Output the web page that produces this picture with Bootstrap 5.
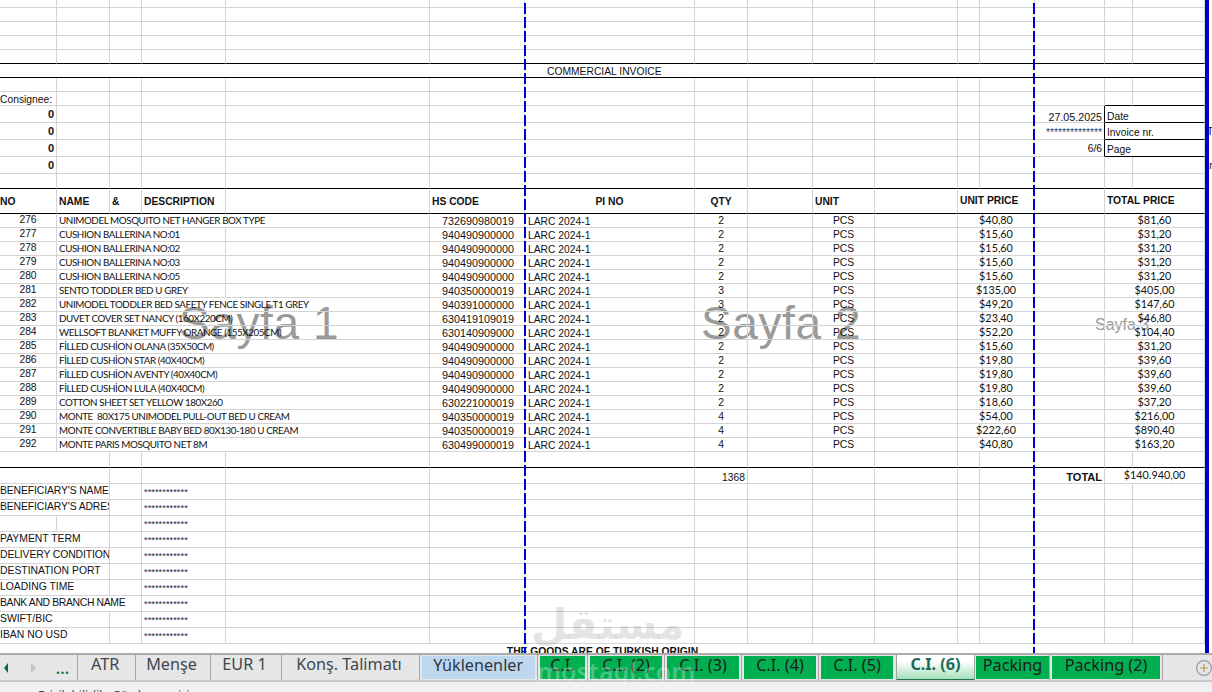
<!DOCTYPE html>
<html lang="tr">
<head>
<meta charset="utf-8">
<title>Commercial Invoice</title>
<link href="https://cdn.jsdelivr.net/npm/bootstrap@5.3.0/dist/css/bootstrap.min.css" rel="stylesheet">
<style>
html,body{height:692px;overflow:hidden;background:#fff}
.xl-sheet{height:653px;overflow:hidden;flex:none}
.xl-grid{width:1212px;table-layout:fixed;border-collapse:separate;border-spacing:0;font:10.3px/10px "Liberation Sans",Arial,sans-serif;color:#111;position:relative;z-index:1}
.xl-grid col:nth-child(1){width:57px}.xl-grid col:nth-child(2){width:53px}.xl-grid col:nth-child(3){width:32px}.xl-grid col:nth-child(4){width:84px}
.xl-grid col:nth-child(5){width:204px}.xl-grid col:nth-child(6){width:95px}.xl-grid col:nth-child(7){width:170px}.xl-grid col:nth-child(8){width:53px}
.xl-grid col:nth-child(9){width:65px}.xl-grid col:nth-child(10){width:62px}.xl-grid col:nth-child(11){width:83px}.xl-grid col:nth-child(12){width:22px}
.xl-grid col:nth-child(13){width:55px}.xl-grid col:nth-child(14){width:70px}.xl-grid col:nth-child(15){width:28px}.xl-grid col:nth-child(16){width:72px}.xl-grid col:nth-child(17){width:7px}
.xl-grid td{padding:0;height:14px;border-right:1px solid #d4d4d4;border-bottom:1px solid #d4d4d4;white-space:nowrap;vertical-align:middle}
.xl-grid td.xl-free{border:0;padding-left:2px;overflow:hidden}
tr.h8 td{height:8px}tr.h15 td{height:15px}tr.h16 td{height:16px}tr.h17 td{height:17px}tr.h25 td{height:25px}
tr.bk td{border-bottom-color:#000}
.xl-grid td.bb{border-bottom-color:#000}.xl-grid td.br{border-right-color:#000}
.xl-grid td.nb{border:0;height:16px}
.clip{overflow:hidden}
.hd{font-weight:700;font-size:10.3px}
.xl-grid td.dn1{padding-top:2px}
.xl-grid td.dn2{padding-top:4px}
.xl-grid td.dn3{padding-top:5px}
.xl-grid td.title{padding-left:22px;padding-top:2px}
.xl-grid td.dt{font-size:10.7px;padding-top:5px}
.xl-grid td.lbl{font-size:10.4px;padding-bottom:1px}
.xl-grid td.tight-s{letter-spacing:-.12px}
.xl-grid td.tight-l{letter-spacing:-.35px}
.xl-grid td.tot{font-size:11px;font-weight:700;padding-top:3px}
.xl-grid td.nm{font-family:Lato,"Liberation Sans",sans-serif;font-size:9.8px;padding-left:2px;letter-spacing:-.4px;padding-bottom:2px}
.xl-grid td.no{text-align:center;padding-bottom:2px}
.xl-grid td.hs{font-size:10.8px;text-align:center;padding-top:1px;padding-left:2px}
.xl-grid td.pi{padding-left:3px;padding-top:2px;font-size:10.3px}
.xl-grid td.pr{font-family:Lato,"Liberation Sans",sans-serif;font-size:10.8px;text-align:center;padding-bottom:1px}
.xl-grid td.stars{font-size:9.4px;color:#2c2745;padding-left:2px}
.xl-grid td.stars-d{font-size:10.3px;color:#1f3f78;padding-top:3px}
.xl-grid td.pl2{padding-left:2px}.xl-grid td.pr2{padding-right:2px}
.xl-grid td.zero{font-weight:700;font-size:11px;text-align:right;padding-right:2px}
.wm{position:absolute;font-family:"Liberation Sans",Arial,sans-serif;color:#9a9a9a;line-height:1;z-index:0;white-space:nowrap}
.wm-1{left:179px;top:300px;font-size:46px;letter-spacing:.6px}
.wm-2{left:701px;top:300px;font-size:46px;letter-spacing:.6px}
.wm-3{left:1095px;top:317px;font-size:16px}
.pb{position:absolute;top:3px;width:2px;height:650px;z-index:2;background:repeating-linear-gradient(#0000d4 0 11px,transparent 11px 14px)}
.pb-1{left:524px}.pb-2{left:1033px}
.edge{position:absolute;top:0;left:1205px;width:4px;height:653px;background:#0000c4;z-index:2}
.mq{position:absolute;z-index:5;pointer-events:none;white-space:nowrap;line-height:1}
.mq-ar{left:531px;top:600px;font:700 42px "DejaVu Sans",sans-serif;color:rgba(150,150,150,.26)}
.mq-en{left:537px;top:654px;font:600 25px "Noto Sans",sans-serif;color:rgba(255,255,255,.28)}
.tabbar{height:29px;flex:none;background:#e6e6e6;border-top:2px solid #ababab;border-bottom:2px solid #c9c9c9;overflow:hidden;font-family:"Noto Sans",sans-serif;font-size:16.2px;line-height:19px;color:#3f4650}
.tab-ctl{width:77px;height:25px;flex:none}
.tab-dots{color:#217346;font:700 14px/16px "Noto Sans",sans-serif;letter-spacing:.6px;margin-left:15px;margin-top:2px}
.tab-it{flex:none;height:25px;border-left:1px solid #a6a6a6;text-align:center}
.tab-fill{display:block;height:23px;margin:1px 2px 0 2px;color:#1c1c1c;line-height:18px}
.g{background:#00b050}.y{background:#bdd7ee;color:#2d3640}
.w1,.w2,.w3,.w4{padding-right:2px}
.w1{width:57.5px}.w2{width:75px}.w3{width:71px}.w4{width:138px}
.w5{width:118.5px}.w6{width:50px}.w7{width:77px}.w8{width:77px}
.w10{width:82px;margin-left:1px;text-align:center}.w11{width:113px}
.tab-active{flex:none;width:79px;height:28px;margin-top:-2px;margin-left:1px;border-left:1px solid #a0a0a0;border-right:1px solid #a0a0a0;border-bottom:2px solid #217346;background:linear-gradient(#fff 0,#fff 8px,#a6e0bb 100%);text-align:center;font-weight:700;color:#1d6a5c;line-height:22px}
.tab-end{flex:none;width:1px;height:25px;background:#a6a6a6}
.tab-plus{flex:none;margin-left:33px;margin-top:5px}
.statusbar{height:10px;flex:none;overflow:hidden;background:#f1f1f1;font:12px/14px "Noto Sans",sans-serif;color:#444;padding:7px 0 0 38px}
</style>
</head>
<body class="d-flex flex-column m-0">
<div class="xl-sheet position-relative">
<span class="wm wm-1">Sayfa 1</span><span class="wm wm-2">Sayfa 2</span><span class="wm wm-3">Sayfa 3</span>
<table class="xl-grid">
<colgroup><col><col><col><col><col><col><col><col><col><col><col><col><col><col><col><col><col></colgroup>
<tbody>
<tr class="h8"><td></td><td></td><td></td><td></td><td></td><td></td><td></td><td></td><td></td><td></td><td></td><td></td><td></td><td></td><td></td><td></td></tr>
<tr><td></td><td></td><td></td><td></td><td></td><td></td><td></td><td></td><td></td><td></td><td></td><td></td><td></td><td></td><td></td><td></td></tr>
<tr><td></td><td></td><td></td><td></td><td></td><td></td><td></td><td></td><td></td><td></td><td></td><td></td><td></td><td></td><td></td><td></td></tr>
<tr><td></td><td></td><td></td><td></td><td></td><td></td><td></td><td></td><td></td><td></td><td></td><td></td><td></td><td></td><td></td><td></td></tr>
<tr class="bk"><td></td><td></td><td></td><td></td><td></td><td></td><td></td><td></td><td></td><td></td><td></td><td></td><td></td><td></td><td></td><td></td></tr>
<tr class="bk"><td colspan="6" class="border-end-0"></td><td colspan="10" class="border-end-0 title">COMMERCIAL INVOICE</td></tr>
<tr><td></td><td></td><td></td><td></td><td></td><td></td><td></td><td></td><td></td><td></td><td></td><td></td><td></td><td></td><td></td><td></td></tr>
<tr><td class="dn1">Consignee:</td><td></td><td></td><td></td><td></td><td></td><td></td><td></td><td></td><td></td><td></td><td></td><td></td><td></td><td class="bb"></td><td class="bb"></td></tr>
<tr class="h17"><td class="zero">0</td><td></td><td></td><td></td><td></td><td></td><td></td><td></td><td></td><td></td><td></td><td></td><td></td><td class="br text-end pr2 dt">27.05.2025</td><td colspan="2" class="bb pl2 dn3">Date</td></tr>
<tr class="h17"><td class="zero">0</td><td></td><td></td><td></td><td></td><td></td><td></td><td></td><td></td><td></td><td></td><td></td><td></td><td class="br text-end pr2 stars-d">**************</td><td colspan="2" class="bb pl2 dn2">Invoice nr.</td><td class="xl-free">T</td></tr>
<tr class="h17"><td class="zero">0</td><td></td><td></td><td></td><td></td><td></td><td></td><td></td><td></td><td></td><td></td><td></td><td></td><td class="br text-end pr2 dn1">6/6</td><td colspan="2" class="bb pl2 dn2">Page</td></tr>
<tr class="h17"><td class="zero">0</td><td></td><td></td><td></td><td></td><td></td><td></td><td></td><td></td><td></td><td></td><td></td><td></td><td></td><td></td><td></td><td class="xl-free">in</td></tr>
<tr class="h15 bk"><td></td><td></td><td></td><td></td><td></td><td></td><td></td><td></td><td></td><td></td><td></td><td></td><td></td><td></td><td></td><td></td></tr>
<tr class="h25 bk hd"><td class="dn1">NO</td><td class="pl2 dn1">NAME</td><td class="pl2 dn1">&amp;</td><td class="pl2 dn1">DESCRIPTION</td><td></td><td class="pl2 dn1">HS CODE</td><td class="text-center dn1">PI NO</td><td class="text-center dn1">QTY</td><td></td><td class="pl2 dn1">UNIT</td><td></td><td colspan="2" class="pl2">UNIT PRICE</td><td></td><td colspan="2" class="pl2">TOTAL PRICE</td></tr>
<tr><td class="no">276</td><td colspan="4" class="nm">UNIMODEL MOSQUITO NET HANGER BOX TYPE</td><td class="hs">732690980019</td><td class="pi">LARC 2024-1</td><td class="text-center">2</td><td></td><td class="text-center">PCS</td><td></td><td colspan="2" class="pr">$40,80</td><td></td><td colspan="2" class="pr">$81,60</td></tr>
<tr><td class="no">277</td><td colspan="3" class="nm">CUSHION BALLERINA NO:01</td><td></td><td class="hs">940490900000</td><td class="pi">LARC 2024-1</td><td class="text-center">2</td><td></td><td class="text-center">PCS</td><td></td><td colspan="2" class="pr">$15,60</td><td></td><td colspan="2" class="pr">$31,20</td></tr>
<tr><td class="no">278</td><td colspan="3" class="nm">CUSHION BALLERINA NO:02</td><td></td><td class="hs">940490900000</td><td class="pi">LARC 2024-1</td><td class="text-center">2</td><td></td><td class="text-center">PCS</td><td></td><td colspan="2" class="pr">$15,60</td><td></td><td colspan="2" class="pr">$31,20</td></tr>
<tr><td class="no">279</td><td colspan="3" class="nm">CUSHION BALLERINA NO:03</td><td></td><td class="hs">940490900000</td><td class="pi">LARC 2024-1</td><td class="text-center">2</td><td></td><td class="text-center">PCS</td><td></td><td colspan="2" class="pr">$15,60</td><td></td><td colspan="2" class="pr">$31,20</td></tr>
<tr><td class="no">280</td><td colspan="3" class="nm">CUSHION BALLERINA NO:05</td><td></td><td class="hs">940490900000</td><td class="pi">LARC 2024-1</td><td class="text-center">2</td><td></td><td class="text-center">PCS</td><td></td><td colspan="2" class="pr">$15,60</td><td></td><td colspan="2" class="pr">$31,20</td></tr>
<tr><td class="no">281</td><td colspan="3" class="nm">SENTO TODDLER BED U GREY</td><td></td><td class="hs">940350000019</td><td class="pi">LARC 2024-1</td><td class="text-center">3</td><td></td><td class="text-center">PCS</td><td></td><td colspan="2" class="pr">$135,00</td><td></td><td colspan="2" class="pr">$405,00</td></tr>
<tr><td class="no">282</td><td colspan="4" class="nm">UNIMODEL TODDLER BED SAFETY FENCE SINGLE T1 GREY</td><td class="hs">940391000000</td><td class="pi">LARC 2024-1</td><td class="text-center">3</td><td></td><td class="text-center">PCS</td><td></td><td colspan="2" class="pr">$49,20</td><td></td><td colspan="2" class="pr">$147,60</td></tr>
<tr><td class="no">283</td><td colspan="4" class="nm">DUVET COVER SET NANCY (160X220CM)</td><td class="hs">630419109019</td><td class="pi">LARC 2024-1</td><td class="text-center">2</td><td></td><td class="text-center">PCS</td><td></td><td colspan="2" class="pr">$23,40</td><td></td><td colspan="2" class="pr">$46,80</td></tr>
<tr><td class="no">284</td><td colspan="4" class="nm">WELLSOFT BLANKET MUFFY ORANGE (155X205CM)</td><td class="hs">630140909000</td><td class="pi">LARC 2024-1</td><td class="text-center">2</td><td></td><td class="text-center">PCS</td><td></td><td colspan="2" class="pr">$52,20</td><td></td><td colspan="2" class="pr">$104,40</td></tr>
<tr><td class="no">285</td><td colspan="4" class="nm">FİLLED CUSHİON OLANA (35X50CM)</td><td class="hs">940490900000</td><td class="pi">LARC 2024-1</td><td class="text-center">2</td><td></td><td class="text-center">PCS</td><td></td><td colspan="2" class="pr">$15,60</td><td></td><td colspan="2" class="pr">$31,20</td></tr>
<tr><td class="no">286</td><td colspan="4" class="nm">FİLLED CUSHİON STAR (40X40CM)</td><td class="hs">940490900000</td><td class="pi">LARC 2024-1</td><td class="text-center">2</td><td></td><td class="text-center">PCS</td><td></td><td colspan="2" class="pr">$19,80</td><td></td><td colspan="2" class="pr">$39,60</td></tr>
<tr><td class="no">287</td><td colspan="4" class="nm">FİLLED CUSHİON AVENTY (40X40CM)</td><td class="hs">940490900000</td><td class="pi">LARC 2024-1</td><td class="text-center">2</td><td></td><td class="text-center">PCS</td><td></td><td colspan="2" class="pr">$19,80</td><td></td><td colspan="2" class="pr">$39,60</td></tr>
<tr><td class="no">288</td><td colspan="4" class="nm">FİLLED CUSHİON LULA (40X40CM)</td><td class="hs">940490900000</td><td class="pi">LARC 2024-1</td><td class="text-center">2</td><td></td><td class="text-center">PCS</td><td></td><td colspan="2" class="pr">$19,80</td><td></td><td colspan="2" class="pr">$39,60</td></tr>
<tr><td class="no">289</td><td colspan="4" class="nm">COTTON SHEET SET YELLOW 180X260</td><td class="hs">630221000019</td><td class="pi">LARC 2024-1</td><td class="text-center">2</td><td></td><td class="text-center">PCS</td><td></td><td colspan="2" class="pr">$18,60</td><td></td><td colspan="2" class="pr">$37,20</td></tr>
<tr><td class="no">290</td><td colspan="4" class="nm">MONTE&nbsp; 80X175 UNIMODEL PULL-OUT BED U CREAM</td><td class="hs">940350000019</td><td class="pi">LARC 2024-1</td><td class="text-center">4</td><td></td><td class="text-center">PCS</td><td></td><td colspan="2" class="pr">$54,00</td><td></td><td colspan="2" class="pr">$216,00</td></tr>
<tr><td class="no">291</td><td colspan="4" class="nm">MONTE CONVERTIBLE BABY BED 80X130-180 U CREAM</td><td class="hs">940350000019</td><td class="pi">LARC 2024-1</td><td class="text-center">4</td><td></td><td class="text-center">PCS</td><td></td><td colspan="2" class="pr">$222,60</td><td></td><td colspan="2" class="pr">$890,40</td></tr>
<tr><td class="no">292</td><td colspan="4" class="nm">MONTE PARIS MOSQUITO NET 8M</td><td class="hs">630499000019</td><td class="pi">LARC 2024-1</td><td class="text-center">4</td><td></td><td class="text-center">PCS</td><td></td><td colspan="2" class="pr">$40,80</td><td></td><td colspan="2" class="pr">$163,20</td></tr>
<tr class="h16 bk"><td colspan="2"></td><td></td><td></td><td></td><td></td><td></td><td></td><td></td><td></td><td></td><td></td><td></td><td></td><td></td><td></td></tr>
<tr class="h16"><td colspan="2"></td><td></td><td></td><td></td><td></td><td></td><td class="text-end pr2 dn2">1368</td><td></td><td></td><td></td><td></td><td></td><td class="text-end pr2 tot">TOTAL</td><td colspan="2" class="pr">$140.940,00</td></tr>
<tr class="h16"><td colspan="2" class="lbl clip tight-s">BENEFICIARY'S NAME</td><td></td><td class="stars">************</td><td></td><td></td><td></td><td></td><td></td><td></td><td></td><td></td><td></td><td></td><td></td><td></td></tr>
<tr class="h16"><td colspan="2" class="lbl clip tight-s">BENEFICIARY'S ADRESS</td><td></td><td class="stars">************</td><td></td><td></td><td></td><td></td><td></td><td></td><td></td><td></td><td></td><td></td><td></td><td></td></tr>
<tr class="h16"><td></td><td></td><td></td><td class="stars">************</td><td></td><td></td><td></td><td></td><td></td><td></td><td></td><td></td><td></td><td></td><td></td><td></td></tr>
<tr class="h16"><td colspan="2" class="lbl clip">PAYMENT TERM</td><td></td><td class="stars">************</td><td></td><td></td><td></td><td></td><td></td><td></td><td></td><td></td><td></td><td></td><td></td><td></td></tr>
<tr class="h16"><td colspan="2" class="lbl clip tight-s">DELIVERY CONDITION</td><td></td><td class="stars">************</td><td></td><td></td><td></td><td></td><td></td><td></td><td></td><td></td><td></td><td></td><td></td><td></td></tr>
<tr class="h16"><td colspan="2" class="lbl clip">DESTINATION PORT</td><td></td><td class="stars">************</td><td></td><td></td><td></td><td></td><td></td><td></td><td></td><td></td><td></td><td></td><td></td><td></td></tr>
<tr class="h16"><td colspan="2" class="lbl clip">LOADING TIME</td><td></td><td class="stars">************</td><td></td><td></td><td></td><td></td><td></td><td></td><td></td><td></td><td></td><td></td><td></td><td></td></tr>
<tr class="h16"><td colspan="3" class="lbl clip tight-l">BANK AND BRANCH NAME</td><td class="stars">************</td><td></td><td></td><td></td><td></td><td></td><td></td><td></td><td></td><td></td><td></td><td></td><td></td></tr>
<tr class="h16"><td colspan="2" class="lbl clip">SWIFT/BIC</td><td></td><td class="stars">************</td><td></td><td></td><td></td><td></td><td></td><td></td><td></td><td></td><td></td><td></td><td></td><td></td></tr>
<tr class="h16"><td colspan="2" class="lbl clip">IBAN NO USD</td><td></td><td class="stars">************</td><td></td><td></td><td></td><td></td><td></td><td></td><td></td><td></td><td></td><td></td><td></td><td></td></tr>
<tr><td colspan="16" class="nb text-center hd">THE GOODS ARE OF TURKISH ORIGIN</td></tr>
</tbody>
</table>
<div class="pb pb-1"></div><div class="pb pb-2"></div><div class="edge"></div>
</div>
<nav class="tabbar d-flex">
  <div class="tab-ctl d-flex align-items-center">
    <svg width="37" height="14" viewBox="0 0 37 14" class="ms-1"><path d="M4 2 V12 L0 7 Z" fill="#0f6b3a"/><path d="M27 2 V12 L32 7 Z" fill="#c4c4c4"/></svg>
    <span class="tab-dots">...</span>
  </div>
  <div class="tab-it w1">ATR</div>
  <div class="tab-it w2">Menşe</div>
  <div class="tab-it w3">EUR 1</div>
  <div class="tab-it w4">Konş. Talimatı</div>
  <div class="tab-it w5"><span class="tab-fill y">Yüklenenler</span></div>
  <div class="tab-it w6"><span class="tab-fill g">C.I.</span></div>
  <div class="tab-it w7"><span class="tab-fill g">C.I. (2)</span></div>
  <div class="tab-it w7"><span class="tab-fill g">C.I. (3)</span></div>
  <div class="tab-it w7"><span class="tab-fill g">C.I. (4)</span></div>
  <div class="tab-it w7"><span class="tab-fill g">C.I. (5)</span></div>
  <div class="tab-active">C.I. (6)</div>
  <div class="w10 flex-none"><span class="tab-fill g mx-0">Packing</span></div>
  <div class="tab-it w11"><span class="tab-fill g">Packing (2)</span></div>
  <div class="tab-end"></div>
  <svg class="tab-plus" width="16" height="16" viewBox="0 0 16 16"><circle cx="8" cy="8" r="7.4" fill="none" stroke="#9a9a9a" stroke-width="1.2"/><path d="M4 8 H12 M8 4 V12" stroke="#b59a5a" stroke-width="1.2"/></svg>
</nav>
<div class="statusbar">Erişilebilirlik: Gözden geçirin</div>
<span class="mq mq-ar" dir="rtl">مستقل</span>
<span class="mq mq-en">mostaql.com</span>
<script src="https://cdn.jsdelivr.net/npm/bootstrap@5.3.0/dist/js/bootstrap.bundle.min.js"></script>
</body>
</html>
